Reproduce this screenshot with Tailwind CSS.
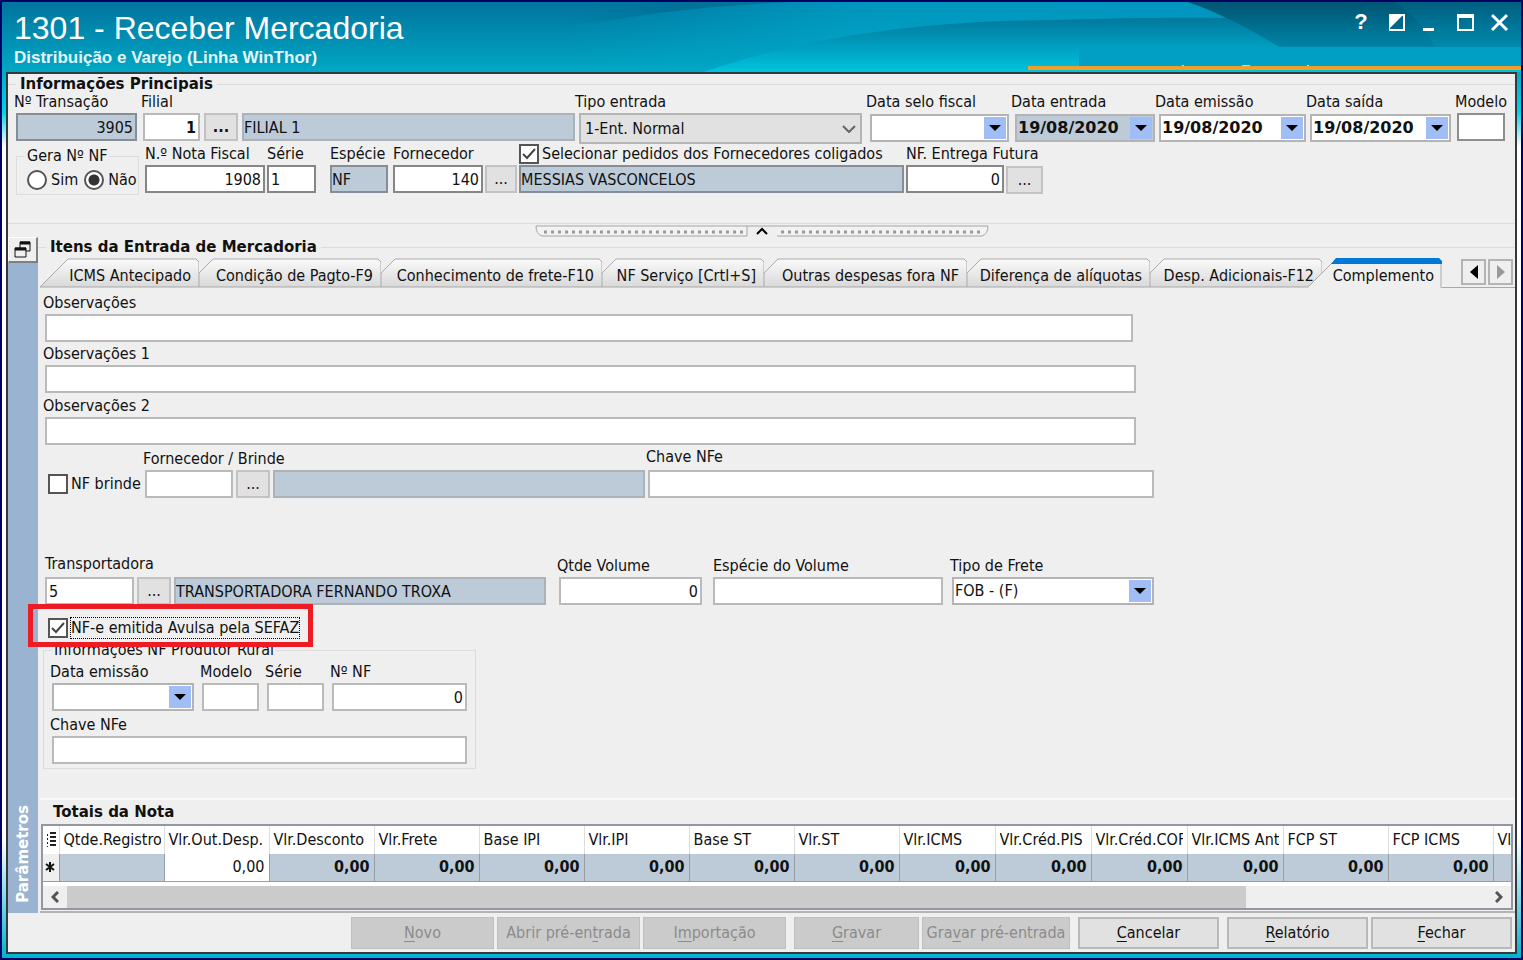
<!DOCTYPE html>
<html lang="pt-BR">

<head>
    <meta charset="UTF-8">
    <meta name="viewport" content="width=device-width, initial-scale=1.0">
    <title>1301 - Receber Mercadoria</title>
    <script src="https://cdn.jsdelivr.net/npm/@tailwindcss/browser@4"></script>
</head>

<body class="font-['DejaVu_Sans_Condensed','Noto_Sans',sans-serif] text-base leading-5 text-[#111]">
    <div class="min-h-screen flex flex-col border-2 border-[#000060]">

        <!-- Title bar -->
        <header class="relative h-[70px] shrink-0 overflow-hidden bg-linear-to-b from-[#00749f] to-[#00a8c4] flex justify-between text-white">
            <svg class="absolute inset-0 size-full" viewBox="0 0 1519 70" preserveAspectRatio="none" aria-hidden="true">
                <defs>
                    <linearGradient id="glow" x1="0" x2="1" y1="0" y2="0">
                        <stop offset="0" stop-color="#00a8cc" stop-opacity="0" />
                        <stop offset="0.3" stop-color="#00aace" stop-opacity="0.6" />
                        <stop offset="0.7" stop-color="#0098c2" stop-opacity="0.9" />
                        <stop offset="1" stop-color="#0098c2" stop-opacity="1" />
                    </linearGradient>
                    <linearGradient id="sliver" x1="0" x2="1" y1="0" y2="0">
                        <stop offset="0" stop-color="#006c92" stop-opacity="0" />
                        <stop offset="0.5" stop-color="#006c92" stop-opacity="0.8" />
                        <stop offset="1" stop-color="#006c92" stop-opacity="0.6" />
                    </linearGradient>
                    <linearGradient id="wave" x1="0" x2="0" y1="0" y2="1">
                        <stop offset="0" stop-color="#00789c" />
                        <stop offset="0.5" stop-color="#009cbe" />
                        <stop offset="1" stop-color="#00c4de" />
                    </linearGradient>
                    <linearGradient id="corner" x1="0" x2="0" y1="0" y2="1">
                        <stop offset="0" stop-color="#005573" />
                        <stop offset="1" stop-color="#0083a6" />
                    </linearGradient>
                    <linearGradient id="edge" x1="0" x2="0" y1="0" y2="1">
                        <stop offset="0" stop-color="#005f80" />
                        <stop offset="1" stop-color="#008aac" />
                    </linearGradient>
                </defs>
                <path d="M560 0H1519V70H560Z" fill="url(#glow)" />
                <path d="M560 0H790C730 3 670 8 610 18C590 20 570 22 560 24Z" fill="url(#sliver)" />
                <path d="M702 70C780 42 900 18 1058 18C1180 14 1300 14 1519 30V70Z" fill="url(#wave)" />
                <path d="M1186 0C1220 12 1250 28 1277 45H1519V0Z" fill="url(#corner)" />
                <path d="M1393 0C1413 14 1425 28 1433 45H1519V0Z" fill="url(#edge)" />
                <path d="M1077 45H1519V64H1077Z" fill="#009fc3" />
                <path d="M1026 64H1519V68H1026Z" fill="#f0a028" />
                <path d="M1180 63H1182V64H1180ZM1240 63H1248V64H1240ZM1305 63H1307V64H1305Z" fill="#b9dbe0" />
            </svg>
            <div class="relative pl-3 pt-2 font-['Liberation_Sans',Arial,sans-serif]">
                <h1 class="text-[32px] leading-9">1301 - Receber Mercadoria</h1>
                <p class="text-[17px] leading-6 font-bold text-[#e4f6fa]">Distribuição e Varejo (Linha WinThor)</p>
            </div>
            <div class="relative flex items-start gap-4 pt-2.5 pr-3">
                <button type="button" aria-label="Ajuda" class="w-4 h-5 mr-1 font-['Liberation_Sans',Arial,sans-serif] text-[22px] leading-5 font-bold">?</button>
                <button type="button" aria-label="Alternar" class="w-[18px] h-5">
                    <svg class="size-[18px]" viewBox="0 0 18 18">
                        <rect x="0" y="2" width="15" height="15" fill="#00678c" stroke="#fff" stroke-width="2" />
                        <path d="M0 2H14L0 16Z" fill="#fff" />
                    </svg>
                </button>
                <button type="button" aria-label="Minimizar" class="w-[18px] h-5">
                    <svg class="size-[18px]" viewBox="0 0 18 18"><path d="M0 15H11V18H0Z" fill="#fff" /></svg>
                </button>
                <button type="button" aria-label="Maximizar" class="w-[18px] h-5">
                    <svg class="size-[18px]" viewBox="0 0 18 18"><path d="M1 3H16V17H1Z" fill="none" stroke="#fff" stroke-width="2" /><path d="M0 1H17V5H0Z" fill="#fff" /></svg>
                </button>
                <button type="button" aria-label="Fechar janela" class="w-[18px] h-5">
                    <svg class="size-[18px]" viewBox="0 0 18 18"><path d="M1 2L16 17M16 2L1 17" stroke="#fff" stroke-width="3" /></svg>
                </button>
            </div>
        </header>

        <!-- Window frame -->
        <div class="flex-1 flex flex-col px-1 pb-1 bg-[linear-gradient(to_bottom,#00aac4_0px,#00d5e5_40px,#fff_75px,#fff_calc(100%-120px),#00b4cc_100%)]">
            <main class="flex-1 flex flex-col border-2 border-[#33393d] bg-[#efefef]">

                <!-- Main information -->
                <fieldset class="mt-0.5 min-w-0 border-y border-[#dcdcdc] pb-7">
                    <legend class="ml-2 px-1 font-['DejaVu_Sans',sans-serif] text-[15px] leading-4 font-bold">Informações Principais</legend>

                    <div class="flex items-start gap-1 pl-2 pr-2.5">
                        <div class="w-[121px]">
                            <label for="transacao" class="block -ml-0.5 mb-px whitespace-nowrap">Nº Transação</label>
                            <input id="transacao" value="3905" readonly class="block w-full h-7 px-0.5 border-2 border-[#868d94] bg-[#bdcbd9] text-right">
                        </div>
                        <div class="w-[57px] ml-0.5">
                            <label for="filial" class="block -ml-0.5 mb-px whitespace-nowrap">Filial</label>
                            <input id="filial" value="1" class="block w-full h-7 px-0.5 border-2 border-[#b9b9b9] bg-white text-right font-bold">
                        </div>
                        <button type="button" aria-label="Pesquisar filial" class="w-[34px] h-7 mt-[21px] border-2 border-[#c2c2c2] bg-[#e1e1e1] leading-4 font-bold">...</button>
                        <div class="flex-1 min-w-0">
                            <input aria-label="Nome da filial" value="FILIAL 1" readonly class="block w-full h-7 mt-[21px] border-2 border-[#abb2b8] bg-[#bdcbd9]">
                        </div>
                        <div class="w-[283px]">
                            <label for="tipo" class="block -ml-1 mb-px whitespace-nowrap">Tipo entrada</label>
                            <div class="grid">
                                <select id="tipo" class="[grid-area:1/1] w-full h-[31px] appearance-none border-2 border-[#b4b4b4] bg-[#e1e1e1] px-1">
                                    <option>1-Ent. Normal</option>
                                </select>
                                <svg class="[grid-area:1/1] self-center justify-self-end mr-1.5 w-3.5 h-2 pointer-events-none" viewBox="0 0 14 8"><path d="M1 1L7 7L13 1" fill="none" stroke="#666" stroke-width="2" /></svg>
                            </div>
                        </div>
                        <div class="w-[139px] ml-1">
                            <label for="selo" class="block -ml-1 mb-0.5 whitespace-nowrap">Data selo fiscal</label>
                            <div class="flex h-7 border-2 border-[#b4b4b4] bg-white p-px">
                                <input id="selo" class="min-w-0 flex-1 font-['DejaVu_Sans',sans-serif] font-bold">
                                <button type="button" aria-label="Abrir calendário" class="w-[22px] grid place-items-center bg-[#a0bdf5]"><svg class="w-3 h-1.5" viewBox="0 0 12 6"><path d="M0 0H12L6 6Z" /></svg></button>
                            </div>
                        </div>
                        <div class="w-[140px] ml-0.5">
                            <label for="entrada" class="block -ml-1 mb-0.5 whitespace-nowrap">Data entrada</label>
                            <div class="flex h-7 border-2 border-[#b4b4b4] bg-[#bdcbd9] p-px">
                                <input id="entrada" value="19/08/2020" class="min-w-0 flex-1 font-['DejaVu_Sans',sans-serif] font-bold">
                                <button type="button" aria-label="Abrir calendário" class="w-[22px] grid place-items-center bg-[#a0bdf5]"><svg class="w-3 h-1.5" viewBox="0 0 12 6"><path d="M0 0H12L6 6Z" /></svg></button>
                            </div>
                        </div>
                        <div class="w-[147px]">
                            <label for="emissao" class="block -ml-1 mb-0.5 whitespace-nowrap">Data emissão</label>
                            <div class="flex h-7 border-2 border-[#b4b4b4] bg-white p-px">
                                <input id="emissao" value="19/08/2020" class="min-w-0 flex-1 font-['DejaVu_Sans',sans-serif] font-bold">
                                <button type="button" aria-label="Abrir calendário" class="w-[22px] grid place-items-center bg-[#a0bdf5]"><svg class="w-3 h-1.5" viewBox="0 0 12 6"><path d="M0 0H12L6 6Z" /></svg></button>
                            </div>
                        </div>
                        <div class="w-[141px]">
                            <label for="saida" class="block -ml-1 mb-0.5 whitespace-nowrap">Data saída</label>
                            <div class="flex h-7 border-2 border-[#b4b4b4] bg-white p-px">
                                <input id="saida" value="19/08/2020" class="min-w-0 flex-1 font-['DejaVu_Sans',sans-serif] font-bold">
                                <button type="button" aria-label="Abrir calendário" class="w-[22px] grid place-items-center bg-[#a0bdf5]"><svg class="w-3 h-1.5" viewBox="0 0 12 6"><path d="M0 0H12L6 6Z" /></svg></button>
                            </div>
                        </div>
                        <div class="w-12 ml-0.5">
                            <label for="modelo" class="block -ml-0.5 mb-px whitespace-nowrap">Modelo</label>
                            <input id="modelo" class="block w-full h-7 border-2 border-[#8e8e8e] bg-white">
                        </div>
                    </div>

                    <div class="flex items-start gap-0.5 pl-2">
                        <fieldset class="w-[123px] mt-0.5 mr-1 border border-[#dcdcdc]">
                            <legend class="ml-2 px-0.5">Gera Nº NF</legend>
                            <div class="flex items-center h-7 pl-2.5 gap-1.5">
                                <label class="flex items-center gap-1">
                                    <input type="radio" name="gera" class="appearance-none size-5 rounded-full border-2 border-[#555] bg-white checked:bg-[radial-gradient(circle,#333_5px,#fff_6px)]">Sim
                                </label>
                                <label class="flex items-center gap-1">
                                    <input type="radio" name="gera" checked class="appearance-none size-5 rounded-full border-2 border-[#555] bg-white checked:bg-[radial-gradient(circle,#333_5px,#fff_6px)]">Não
                                </label>
                            </div>
                        </fieldset>
                        <div class="w-[120px]">
                            <label for="nota" class="block mb-px whitespace-nowrap">N.º Nota Fiscal</label>
                            <input id="nota" value="1908" class="block w-full h-7 px-0.5 border-2 border-[#868686] bg-white text-right">
                        </div>
                        <div class="w-[49px]">
                            <label for="serie" class="block mb-px whitespace-nowrap">Série</label>
                            <input id="serie" value="1" class="block w-full h-7 px-0.5 border-2 border-[#868686] bg-white">
                        </div>
                        <div class="w-[58px] ml-3">
                            <label for="especie" class="block mb-px whitespace-nowrap">Espécie</label>
                            <input id="especie" value="NF" readonly class="block w-full h-7 border-2 border-[#868d94] bg-[#bdcbd9]">
                        </div>
                        <div class="w-[90px] ml-[3px]">
                            <label for="fornecedor" class="block mb-px whitespace-nowrap">Fornecedor</label>
                            <input id="fornecedor" value="140" class="block w-full h-7 px-0.5 border-2 border-[#868686] bg-white text-right">
                        </div>
                        <button type="button" aria-label="Pesquisar fornecedor" class="w-8 h-7 mt-[21px] border-2 border-[#c2c2c2] bg-[#e1e1e1] leading-4">...</button>
                        <div class="w-[385px]">
                            <label class="flex items-center gap-[3px] mb-px whitespace-nowrap">
                                <span class="grid">
                                    <input type="checkbox" checked class="peer [grid-area:1/1] appearance-none size-5 border-2 border-[#555] bg-white">
                                    <svg class="[grid-area:1/1] size-5 pointer-events-none invisible peer-checked:visible" viewBox="0 0 20 20"><path d="M4 10L8 14L16 5" fill="none" stroke="#444" stroke-width="2" /></svg>
                                </span>
                                Selecionar pedidos dos Fornecedores coligados
                            </label>
                            <input aria-label="Nome do fornecedor" value="MESSIAS VASCONCELOS" readonly class="block w-full h-7 border-2 border-[#868d94] bg-[#bdcbd9]">
                        </div>
                        <div class="w-[98px]">
                            <label for="futura" class="block mb-px whitespace-nowrap">NF. Entrega Futura</label>
                            <input id="futura" value="0" class="block w-full h-7 px-0.5 border-2 border-[#868686] bg-white text-right">
                        </div>
                        <button type="button" aria-label="Pesquisar NF" class="w-[37px] h-7 mt-[22px] border-2 border-[#c2c2c2] bg-[#e1e1e1] leading-4">...</button>
                    </div>
                </fieldset>

                <!-- Splitter -->
                <div class="flex justify-center items-end h-[13px]">
                    <button type="button" aria-label="Recolher" class="w-[454px] h-3">
                        <svg class="block w-[454px] h-3" viewBox="0 0 454 12">
                            <path d="M1 1H212V11H7Q1 9 1 1ZM453 1H242V11H447Q453 9 453 1Z" fill="#f2f2f2" />
                            <path d="M212 1H1Q1 9 7 11H212V1H453Q453 9 447 11H242" fill="none" stroke="#a5a5a5" stroke-width="1" />
                            <path d="M9 7H208M246 7H448" stroke="#999" stroke-width="3" stroke-dasharray="3 4" />
                            <path d="M222 9L227 4L232 9" fill="none" stroke="#000" stroke-width="2" />
                        </svg>
                    </button>
                </div>

                <div class="flex-1 flex">
                    <!-- Collapsed parameters bar -->
                    <aside class="w-[30px] shrink-0 flex flex-col bg-[#9ab3d1]">
                        <button type="button" aria-label="Abrir parâmetros" class="h-[26px] grid place-items-center bg-[#efefef] border-t border-l border-t-white border-l-white border-b-2 border-r-2 border-b-[#808080] border-r-[#808080]">
                            <svg class="w-[18px] h-[17px]" viewBox="0 0 18 17"><path d="M6 7V1H16V10H12M1 7H12V16H1Z" fill="none" stroke="#111" stroke-width="1" /><path d="M6 2H16M1 8H12" stroke="#111" stroke-width="3" /></svg>
                        </button>
                        <span class="mt-auto mb-2.5 self-center [writing-mode:vertical-rl] rotate-180 font-['DejaVu_Sans',sans-serif] text-[15px] leading-5 font-bold text-white">Parâmetros</span>
                    </aside>

                    <section class="flex-1 min-w-0 flex flex-col">
                        <fieldset class="min-w-0 border-t border-[#dcdcdc]">
                            <legend class="ml-2 px-1 font-['DejaVu_Sans',sans-serif] text-[15px] leading-5 font-bold">Itens da Entrada de Mercadoria</legend>

                            <!-- Tabs -->
                            <div class="flex items-end pl-0.5 h-[31px] whitespace-nowrap">
                                <button type="button" class="grid w-[159px] h-[30px] shrink-0">
                                    <svg class="[grid-area:1/1] w-[159px] h-[30px]" viewBox="0 0 159 30">
                                        <linearGradient id="tabfill" x1="0" x2="0" y1="0" y2="1"><stop offset="0" stop-color="#fafafa" /><stop offset="1" stop-color="#d9d9d9" /></linearGradient>
                                        <path d="M0 29L28 1H156L159 4V29Z" fill="url(#tabfill)" stroke="#a9a9a9" />
                                    </svg>
                                    <span class="[grid-area:1/1] self-center justify-self-end pr-2 pt-1.5">ICMS Antecipado</span>
                                </button>
                                <button type="button" class="grid w-[182px] h-[30px] shrink-0">
                                    <svg class="[grid-area:1/1] w-[182px] h-[30px]" viewBox="0 0 182 30"><path d="M0 29V15L14 1H179L182 4V29Z" fill="url(#tabfill)" stroke="#a9a9a9" /></svg>
                                    <span class="[grid-area:1/1] self-center justify-self-end pr-2 pt-1.5">Condição de Pagto-F9</span>
                                </button>
                                <button type="button" class="grid w-[221px] h-[30px] shrink-0">
                                    <svg class="[grid-area:1/1] w-[221px] h-[30px]" viewBox="0 0 221 30"><path d="M0 29V15L14 1H218L221 4V29Z" fill="url(#tabfill)" stroke="#a9a9a9" /></svg>
                                    <span class="[grid-area:1/1] self-center justify-self-end pr-2 pt-1.5">Conhecimento de frete-F10</span>
                                </button>
                                <button type="button" class="grid w-[162px] h-[30px] shrink-0">
                                    <svg class="[grid-area:1/1] w-[162px] h-[30px]" viewBox="0 0 162 30"><path d="M0 29V15L14 1H159L162 4V29Z" fill="url(#tabfill)" stroke="#a9a9a9" /></svg>
                                    <span class="[grid-area:1/1] self-center justify-self-end pr-2 pt-1.5">NF Serviço [Crtl+S]</span>
                                </button>
                                <button type="button" class="grid w-[203px] h-[30px] shrink-0">
                                    <svg class="[grid-area:1/1] w-[203px] h-[30px]" viewBox="0 0 203 30"><path d="M0 29V15L14 1H200L203 4V29Z" fill="url(#tabfill)" stroke="#a9a9a9" /></svg>
                                    <span class="[grid-area:1/1] self-center justify-self-end pr-2 pt-1.5">Outras despesas fora NF</span>
                                </button>
                                <button type="button" class="grid w-[183px] h-[30px] shrink-0">
                                    <svg class="[grid-area:1/1] w-[183px] h-[30px]" viewBox="0 0 183 30"><path d="M0 29V15L14 1H180L183 4V29Z" fill="url(#tabfill)" stroke="#a9a9a9" /></svg>
                                    <span class="[grid-area:1/1] self-center justify-self-end pr-2 pt-1.5">Diferença de alíquotas</span>
                                </button>
                                <button type="button" class="grid w-[172px] h-[30px] shrink-0">
                                    <svg class="[grid-area:1/1] w-[172px] h-[30px]" viewBox="0 0 172 30"><path d="M0 29V15L14 1H169L172 4V15L158 29Z" fill="url(#tabfill)" stroke="#a9a9a9" /></svg>
                                    <span class="[grid-area:1/1] self-center justify-self-end pr-2 pt-1.5">Desp. Adicionais-F12</span>
                                </button>
                                <button type="button" class="grid w-[134px] h-[30px] -ml-3.5 shrink-0">
                                    <svg class="[grid-area:1/1] w-[134px] h-[30px]" viewBox="0 0 134 30">
                                        <path d="M14 15L28 1H131L133 4V30H14Z" fill="#efefef" />
                                        <path d="M0 29L28 1H131L133 4V30" fill="none" stroke="#a9a9a9" />
                                        <path d="M28 0H131L134 3V6H23Z" fill="#0078d7" />
                                    </svg>
                                    <span class="[grid-area:1/1] self-center justify-self-end pr-2 pt-1.5">Complemento</span>
                                </button>
                                <div class="flex-1 h-[30px] flex justify-end items-start gap-0.5 pt-px pr-0.5 border-b border-[#a9a9a9]">
                                    <button type="button" aria-label="Abas anteriores" class="w-[25px] h-[26px] grid place-items-center border-2 border-[#b4b4b4]"><svg class="w-2 h-3.5" viewBox="0 0 8 14"><path d="M8 0V14L0 7Z" /></svg></button>
                                    <button type="button" aria-label="Próximas abas" class="w-[25px] h-[26px] grid place-items-center border-2 border-[#b4b4b4]"><svg class="w-2 h-3.5" viewBox="0 0 8 14"><path d="M0 0V14L8 7Z" fill="#999" /></svg></button>
                                </div>
                            </div>

                            <!-- Complemento -->
                            <div class="flex flex-col gap-0.5 pl-[7px] pt-[5px]">
                                <div class="max-w-[1088px]">
                                    <label for="obs" class="block -ml-0.5 mb-px">Observações</label>
                                    <input id="obs" class="block w-full h-7 border-2 border-[#bababa] bg-white">
                                </div>
                                <div class="max-w-[1091px]">
                                    <label for="obs1" class="block -ml-0.5 mb-px">Observações 1</label>
                                    <input id="obs1" class="block w-full h-7 border-2 border-[#bababa] bg-white">
                                </div>
                                <div class="max-w-[1091px] mt-px">
                                    <label for="obs2" class="block -ml-0.5 mb-px">Observações 2</label>
                                    <input id="obs2" class="block w-full h-7 border-2 border-[#bababa] bg-white">
                                </div>

                                <div class="flex items-end gap-[3px]">
                                    <label class="flex items-center gap-[3px] w-[95px] h-7 pl-[3px] whitespace-nowrap">
                                        <span class="grid">
                                            <input type="checkbox" class="peer [grid-area:1/1] appearance-none size-5 border-2 border-[#555] bg-white">
                                            <svg class="[grid-area:1/1] size-5 pointer-events-none invisible peer-checked:visible" viewBox="0 0 20 20"><path d="M4 10L8 14L16 5" fill="none" stroke="#444" stroke-width="2" /></svg>
                                        </span>
                                        NF brinde
                                    </label>
                                    <div class="w-[88px] ml-0.5">
                                        <label for="brinde" class="block -ml-0.5 mb-px whitespace-nowrap">Fornecedor / Brinde</label>
                                        <input id="brinde" class="block w-full h-7 border-2 border-[#bababa] bg-white">
                                    </div>
                                    <button type="button" aria-label="Pesquisar brinde" class="w-[34px] h-7 border-2 border-[#c2c2c2] bg-[#e1e1e1] leading-4">...</button>
                                    <input aria-label="Nome do fornecedor brinde" readonly class="w-[372px] h-7 border-2 border-[#abb2b8] bg-[#bdcbd9]">
                                    <div class="w-[506px]">
                                        <label for="chave" class="block -ml-0.5 mb-[3px] whitespace-nowrap">Chave NFe</label>
                                        <input id="chave" class="block w-full h-7 border-2 border-[#bababa] bg-white">
                                    </div>
                                </div>

                                <div class="flex items-end gap-[3px] mt-[54px]">
                                    <div class="w-[89px]">
                                        <label for="transp" class="block mb-[3px] whitespace-nowrap">Transportadora</label>
                                        <input id="transp" value="5" class="block w-full h-7 px-0.5 border-2 border-[#bababa] bg-white">
                                    </div>
                                    <button type="button" aria-label="Pesquisar transportadora" class="w-[34px] h-7 border-2 border-[#c2c2c2] bg-[#e1e1e1] leading-4">...</button>
                                    <input aria-label="Nome da transportadora" value="TRANSPORTADORA FERNANDO TROXA" readonly class="w-[372px] h-7 border-2 border-[#abb2b8] bg-[#bdcbd9]">
                                    <div class="w-[143px] ml-2.5">
                                        <label for="qtde" class="block -ml-0.5 mb-px whitespace-nowrap">Qtde Volume</label>
                                        <input id="qtde" value="0" class="block w-full h-7 px-0.5 border-2 border-[#bababa] bg-white text-right">
                                    </div>
                                    <div class="w-[230px] ml-2">
                                        <label for="volume" class="block mb-px whitespace-nowrap">Espécie do Volume</label>
                                        <input id="volume" class="block w-full h-7 border-2 border-[#bababa] bg-white">
                                    </div>
                                    <div class="w-[202px] ml-1.5">
                                        <label for="frete" class="block -ml-0.5 mb-px whitespace-nowrap">Tipo de Frete</label>
                                        <div class="grid h-7 border-2 border-[#b4b4b4] bg-white p-px">
                                            <select id="frete" class="[grid-area:1/1] appearance-none">
                                                <option>FOB - (F)</option>
                                            </select>
                                            <span class="[grid-area:1/1] justify-self-end w-[22px] grid place-items-center bg-[#a0bdf5] pointer-events-none"><svg class="w-3 h-1.5" viewBox="0 0 12 6"><path d="M0 0H12L6 6Z" /></svg></span>
                                        </div>
                                    </div>
                                </div>

                                <div class="relative z-10 w-[264px] mt-[11px] pl-[3px]">
                                    <label class="flex items-center gap-[3px] whitespace-nowrap">
                                        <span class="grid">
                                            <input type="checkbox" checked class="peer [grid-area:1/1] appearance-none size-5 border-2 border-[#555] bg-white">
                                            <svg class="[grid-area:1/1] size-5 pointer-events-none invisible peer-checked:visible" viewBox="0 0 20 20"><path d="M4 10L8 14L16 5" fill="none" stroke="#444" stroke-width="2" /></svg>
                                        </span>
                                        <span class="outline outline-dotted outline-black">NF-e emitida Avulsa pela SEFAZ</span>
                                    </label>
                                    <!-- Highlight -->
                                    <div class="absolute -left-[17px] -right-1 -top-3.5 -bottom-[9px] border-5 border-[#ed1c24] pointer-events-none"></div>
                                </div>

                                <fieldset class="w-[433px] -ml-0.5 border border-[#dcdcdc] px-2 pt-0.5 pb-1">
                                    <legend class="px-0.5">Informações NF Produtor Rural</legend>
                                    <div class="flex gap-2">
                                        <div class="w-[142px]">
                                            <label for="rural-data" class="block -ml-0.5 mb-px whitespace-nowrap">Data emissão</label>
                                            <div class="flex h-7 border-2 border-[#b4b4b4] bg-white p-px">
                                                <input id="rural-data" class="min-w-0 flex-1">
                                                <button type="button" aria-label="Abrir calendário" class="w-[22px] grid place-items-center bg-[#a0bdf5]"><svg class="w-3 h-1.5" viewBox="0 0 12 6"><path d="M0 0H12L6 6Z" /></svg></button>
                                            </div>
                                        </div>
                                        <div class="w-[57px]">
                                            <label for="rural-modelo" class="block -ml-0.5 mb-px whitespace-nowrap">Modelo</label>
                                            <input id="rural-modelo" class="block w-full h-7 border-2 border-[#bababa] bg-white">
                                        </div>
                                        <div class="w-[57px]">
                                            <label for="rural-serie" class="block -ml-0.5 mb-px whitespace-nowrap">Série</label>
                                            <input id="rural-serie" class="block w-full h-7 border-2 border-[#bababa] bg-white">
                                        </div>
                                        <div class="flex-1">
                                            <label for="rural-nf" class="block -ml-0.5 mb-px whitespace-nowrap">Nº NF</label>
                                            <input id="rural-nf" value="0" class="block w-full h-7 px-0.5 border-2 border-[#bababa] bg-white text-right">
                                        </div>
                                    </div>
                                    <label for="rural-chave" class="block -ml-0.5 mt-1 mb-px">Chave NFe</label>
                                    <input id="rural-chave" class="block w-full h-7 border-2 border-[#bababa] bg-white">
                                </fieldset>
                            </div>
                        </fieldset>

                        <!-- Totals -->
                        <section class="mt-auto ml-0.5 pl-px pr-0.5 pb-px border-t-2 border-t-[#f9f9f9] border-b-2 border-b-[#b4b4b4]">
                            <h2 class="pl-3 font-['DejaVu_Sans',sans-serif] text-[15px] leading-6 font-bold">Totais da Nota</h2>
                            <div class="border-2 border-[#93979f] bg-white overflow-hidden">
                                <div class="overflow-hidden">
                                    <table class="table-fixed w-[1470px] border-collapse whitespace-nowrap">
                                        <colgroup>
                                            <col class="w-[16px]"><col class="w-[105px]"><col class="w-[105px]"><col class="w-[105px]"><col class="w-[105px]"><col class="w-[105px]"><col class="w-[105px]"><col class="w-[105px]"><col class="w-[105px]"><col class="w-[96px]"><col class="w-[96px]"><col class="w-[96px]"><col class="w-[96px]"><col class="w-[105px]"><col class="w-[105px]"><col>
                                        </colgroup>
                                        <thead>
                                            <tr class="h-7 text-left [&>th]:font-normal [&>th]:overflow-hidden [&>th]:pl-1 [&>th]:border-r [&>th]:border-[#ddd]">
                                                <th aria-label="Menu"><svg class="w-[9px] h-[15px]" viewBox="0 0 9 15"><path d="M3 1H9M3 5H9M3 9H9M3 13H9" stroke="#222" stroke-width="2" /><path d="M0 3H1M0 7H1M0 11H1M0 15H1" stroke="#222" stroke-width="2" /></svg></th>
                                                <th><div class="w-[97px] overflow-hidden">Qtde.Registros</div></th>
                                                <th>Vlr.Out.Desp.</th>
                                                <th>Vlr.Desconto</th>
                                                <th>Vlr.Frete</th>
                                                <th>Base IPI</th>
                                                <th>Vlr.IPI</th>
                                                <th>Base ST</th>
                                                <th>Vlr.ST</th>
                                                <th>Vlr.ICMS</th>
                                                <th><div class="w-[88px] overflow-hidden">Vlr.Créd.PIS</div></th>
                                                <th><div class="w-[87px] overflow-hidden">Vlr.Créd.COFINS</div></th>
                                                <th><div class="w-[87px] overflow-hidden">Vlr.ICMS Antecipado</div></th>
                                                <th>FCP ST</th>
                                                <th>FCP ICMS</th>
                                                <th>Vlr</th>
                                            </tr>
                                        </thead>
                                        <tbody>
                                            <tr class="h-7 bg-[#bdcbd9] text-right font-bold [&>td]:pr-1 [&>td]:border-r [&>td]:border-b [&>td]:border-[#979da5]">
                                                <td class="bg-[#efefef] text-center"><svg class="w-2.5 h-3 ml-0.5" viewBox="0 0 10 12"><path d="M5 1V11M1 3L9 9M9 3L1 9" stroke="#111" stroke-width="2" /></svg></td>
                                                <td></td>
                                                <td class="bg-white font-normal">0,00</td>
                                                <td>0,00</td>
                                                <td>0,00</td>
                                                <td>0,00</td>
                                                <td>0,00</td>
                                                <td>0,00</td>
                                                <td>0,00</td>
                                                <td>0,00</td>
                                                <td>0,00</td>
                                                <td>0,00</td>
                                                <td>0,00</td>
                                                <td>0,00</td>
                                                <td>0,00</td>
                                                <td></td>
                                            </tr>
                                        </tbody>
                                    </table>
                                </div>
                                <!-- Horizontal scrollbar -->
                                <div class="flex items-stretch h-[22px] mt-1 bg-[#efefef]">
                                    <button type="button" aria-label="Rolar para a esquerda" class="w-6 grid place-items-center"><svg class="w-2 h-3" viewBox="0 0 8 12"><path d="M7 1L2 6L7 11" fill="none" stroke="#555" stroke-width="3" /></svg></button>
                                    <div class="flex-1"><div class="w-[83%] h-full bg-[#cbcbcb]"></div></div>
                                    <button type="button" aria-label="Rolar para a direita" class="w-6 grid place-items-center"><svg class="w-2 h-3" viewBox="0 0 8 12"><path d="M1 1L6 6L1 11" fill="none" stroke="#555" stroke-width="3" /></svg></button>
                                </div>
                            </div>
                        </section>
                    </section>
                </div>

                <!-- Actions -->
                <footer class="flex justify-end gap-[3px] pt-1 pr-[3px] pb-[3px]">
                    <button type="button" disabled class="w-[143px] h-8 border border-[#bfbfbf] bg-[#cbcbcb] text-[#8b8b8b]"><u class="underline-offset-3">N</u>ovo</button>
                    <button type="button" disabled class="w-[143px] h-8 border border-[#bfbfbf] bg-[#cbcbcb] text-[#8b8b8b] whitespace-nowrap">Abrir pré-en<u class="underline-offset-3">t</u>rada</button>
                    <button type="button" disabled class="w-[143px] h-8 border border-[#bfbfbf] bg-[#cbcbcb] text-[#8b8b8b]">I<u class="underline-offset-3">m</u>portação</button>
                    <button type="button" disabled class="w-[125px] h-8 ml-[5px] border border-[#bfbfbf] bg-[#cbcbcb] text-[#8b8b8b]"><u class="underline-offset-3">G</u>ravar</button>
                    <button type="button" disabled class="w-[148px] h-8 border border-[#bfbfbf] bg-[#cbcbcb] text-[#8b8b8b] whitespace-nowrap">Gra<u class="underline-offset-3">v</u>ar pré-entrada</button>
                    <button type="button" class="w-[141px] h-8 ml-[5px] border-2 border-[#b9b9b9] bg-[#e1e1e1]"><u class="underline-offset-3">C</u>ancelar</button>
                    <button type="button" class="w-[141px] h-8 ml-[5px] border-2 border-[#b9b9b9] bg-[#e1e1e1]"><u class="underline-offset-3">R</u>elatório</button>
                    <button type="button" class="w-[141px] h-8 border-2 border-[#b9b9b9] bg-[#e1e1e1]"><u class="underline-offset-3">F</u>echar</button>
                </footer>
            </main>
        </div>
    </div>
</body>

</html>
